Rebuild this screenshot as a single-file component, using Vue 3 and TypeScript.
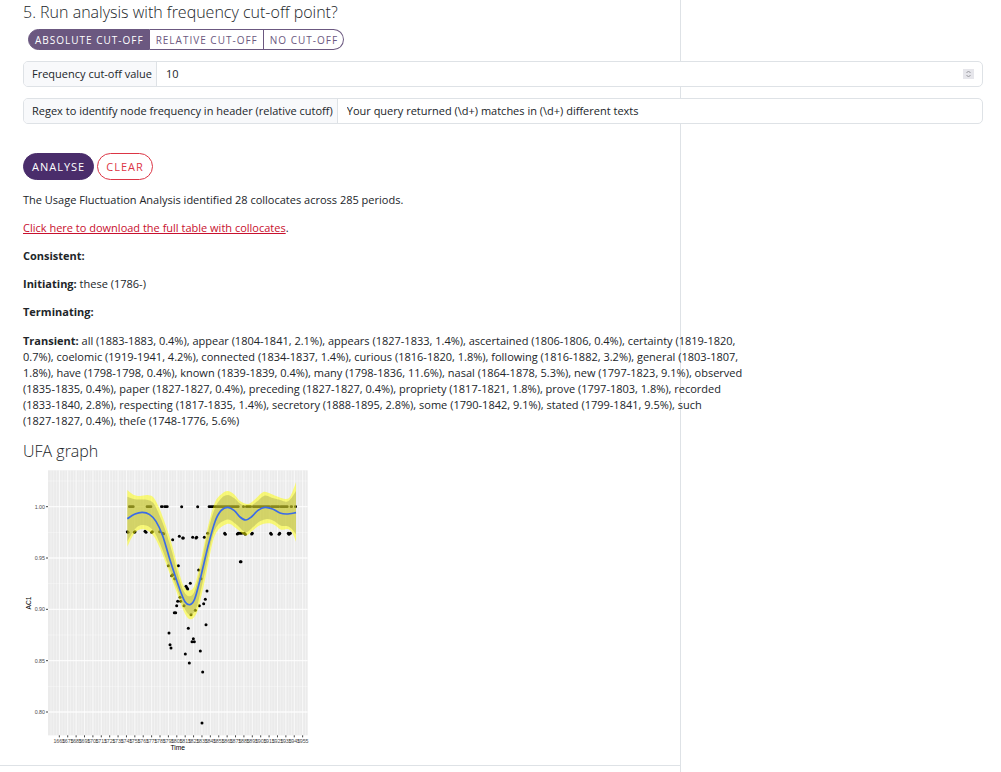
<script setup lang="ts">
import { ref } from 'vue'

type Point = [number, number]

const modes = ['Absolute cut-off', 'Relative cut-off', 'No cut-off']
const mode = ref(modes[0])
const cutoff = ref(10)
const regex = ref('Your query returned (\\d+) matches in (\\d+) different texts')

const transient = [
  'all (1883-1883, 0.4%), appear (1804-1841, 2.1%), appears (1827-1833, 1.4%), ascertained (1806-1806, 0.4%), certainty (1819-1820,',
  '0.7%), coelomic (1919-1941, 4.2%), connected (1834-1837, 1.4%), curious (1816-1820, 1.8%), following (1816-1882, 3.2%), general (1803-1807,',
  '1.8%), have (1798-1798, 0.4%), known (1839-1839, 0.4%), many (1798-1836, 11.6%), nasal (1864-1878, 5.3%), new (1797-1823, 9.1%), observed',
  '(1835-1835, 0.4%), paper (1827-1827, 0.4%), preceding (1827-1827, 0.4%), propriety (1817-1821, 1.8%), prove (1797-1803, 1.8%), recorded',
  '(1833-1840, 2.8%), respecting (1817-1835, 1.4%), secretory (1888-1895, 2.8%), some (1790-1842, 9.1%), stated (1799-1841, 9.5%), such',
  '(1827-1827, 0.4%), theſe (1748-1776, 5.6%)',
]

const years = Array.from({ length: 30 }, (_, i) => ({ label: 1665 + i * 10, x: 118 + i * 25.17 }))
const minor = Array.from({ length: 93 }, (_, i) => 93 + i * 8.39).filter((x) => x < 862)
const levels = [
  { label: '1.00', y: 125 },
  { label: '0.95', y: 279 },
  { label: '0.90', y: 433 },
  { label: '0.85', y: 587 },
  { label: '0.80', y: 741 },
]
const halfLevels = [48, 202, 356, 510, 664]

function smooth(p: Point[]): string {
  let d = ''
  for (let i = 0; i < p.length - 1; i++) {
    const a = p[Math.max(0, i - 1)]
    const b = p[i]
    const c = p[i + 1]
    const e = p[Math.min(p.length - 1, i + 2)]
    d += `C${b[0] + (c[0] - a[0]) / 6} ${b[1] + (c[1] - a[1]) / 6} ${c[0] - (e[0] - b[0]) / 6} ${c[1] - (e[1] - b[1]) / 6} ${c[0]} ${c[1]}`
  }
  return d
}

const trend: Point[] = [[322, 161], [345, 147], [367, 142], [388, 148], [408, 169], [428, 212], [450, 285], [480, 375], [495, 410], [510, 419], [524, 402], [540, 345], [565, 240], [585, 170], [603, 137], [623, 127], [643, 137], [660, 156], [677, 165], [694, 156], [714, 136], [735, 127], [758, 132], [780, 144], [800, 147], [828, 143]]
const upper: Point[] = [[322, 75], [340, 89], [360, 93], [382, 90], [400, 97], [418, 130], [436, 178], [456, 240], [478, 325], [492, 365], [508, 377], [525, 358], [545, 275], [565, 180], [585, 112], [605, 87], [623, 78], [642, 88], [660, 108], [685, 117], [710, 98], [730, 81], [752, 86], [776, 96], [798, 102], [812, 92], [828, 52]]
const lower: Point[] = [[322, 245], [338, 213], [354, 196], [370, 193], [388, 200], [405, 219], [425, 262], [450, 328], [475, 395], [495, 446], [512, 463], [530, 444], [546, 385], [562, 310], [578, 232], [592, 198], [612, 181], [630, 177], [652, 193], [677, 212], [700, 195], [720, 181], [742, 175], [762, 179], [783, 194], [803, 192], [816, 202], [828, 230]]
const innerUpper: Point[] = [[322, 95], [345, 103], [380, 104], [400, 114], [416, 145], [435, 193], [456, 260], [478, 343], [492, 380], [508, 394], [525, 375], [545, 292], [565, 195], [585, 129], [605, 99], [623, 90], [642, 99], [662, 117], [685, 125], [710, 110], [733, 92], [755, 98], [778, 104], [800, 110], [815, 98], [828, 78]]
const innerLower: Point[] = [[322, 230], [338, 202], [354, 184], [370, 180], [388, 186], [405, 205], [425, 248], [450, 315], [475, 382], [495, 433], [511, 450], [528, 432], [543, 374], [560, 297], [577, 217], [592, 182], [612, 167], [630, 165], [652, 181], [677, 202], [700, 185], [720, 169], [742, 162], [762, 168], [783, 182], [803, 184], [816, 193], [828, 208]]

const start = (p: Point[]) => `M${p[0][0]} ${p[0][1]}`
const line = (p: Point[]) => start(p) + smooth(p)
const band = (top: Point[], bottom: Point[]) => {
  const back = [...bottom].reverse()
  return `${line(top)}L${back[0][0]} ${back[0][1]}${smooth(back)}Z`
}

const runs = [[328, 340], [381, 393], [424, 427], [434, 442], [567, 655], [670, 671], [679, 692], [700, 748], [754, 776], [782, 802], [813, 815], [826, 827]]
const dots: Point[] = [
  [485, 125], [533, 125],
  [322, 200], [324, 202], [343, 202], [345, 200], [375, 199], [378, 202], [395, 202], [397, 200], [419, 200], [428, 205], [431, 206],
  [458, 224], [478, 214], [488, 219], [490, 219], [518, 217], [528, 219], [530, 217], [553, 217], [563, 205],
  [614, 205], [616, 208], [652, 207], [655, 205], [660, 205], [665, 205], [673, 205], [676, 208], [695, 207], [697, 205],
  [752, 205], [754, 208], [777, 208], [779, 205], [805, 205], [807, 208], [811, 205], [661, 290], [663, 290],
  [445, 302], [475, 302], [536, 315], [455, 332], [458, 329], [464, 341], [543, 341], [511, 355], [498, 364], [503, 372], [501, 369],
  [480, 397], [561, 378], [556, 403], [473, 409], [482, 409], [551, 416], [470, 422], [492, 422], [538, 422], [463, 443], [467, 443],
  [526, 436], [513, 449], [558, 479], [505, 490], [447, 504], [520, 521], [516, 530], [523, 530], [450, 539], [453, 549], [541, 558],
  [496, 567], [508, 594], [548, 621], [546, 774],
]
</script>

<template>
  <div class="page">
    <div class="column-rule"></div>
    <main class="content">
      <form @submit.prevent>
        <h2>5. Run analysis with frequency cut-off point?</h2>
        <div class="modes">
          <button v-for="m in modes" :key="m" type="button" :class="{ active: m === mode }" @click="mode = m">{{ m }}</button>
        </div>
        <div class="group">
          <label for="cutoff">Frequency cut-off value</label>
          <input id="cutoff" v-model="cutoff" type="number" />
          <button class="spinner" type="button" aria-label="Increase value" @click="cutoff++">
            <svg viewBox="0 0 11 10"><path d="M3.500 4 5.500 2 7.500 4M3.500 6 5.500 8 7.500 6" /></svg>
          </button>
        </div>
        <div class="group">
          <label for="regex">Regex to identify node frequency in header (relative cutoff)</label>
          <input id="regex" v-model="regex" type="text" />
        </div>
        <div class="actions">
          <button class="analyse" type="submit">Analyse</button>
          <button class="clear" type="button">Clear</button>
        </div>
      </form>

      <section class="results">
        <p>The Usage Fluctuation Analysis identified 28 collocates across 285 periods.</p>
        <p><a href="#">Click here to download the full table with collocates</a>.</p>
        <p><strong>Consistent:</strong></p>
        <p><strong>Initiating:</strong> these (1786-)</p>
        <p><strong>Terminating:</strong></p>
        <p class="transient"><strong>Transient:</strong> <template v-for="t in transient" :key="t">{{ t }}<br /></template></p>
      </section>

      <h2>UFA graph</h2>
      <svg class="graph" viewBox="0 0 870 870" role="img" aria-label="UFA graph">
        <rect x="84" y="16" width="779" height="795" fill="#ebebeb" />
        <g stroke="#fff">
          <path v-for="x in minor" :key="x" :d="`M${x} 16V811`" stroke-width="3" opacity=".35" />
          <path v-for="y in years" :key="y.label" :d="`M${y.x} 16V811`" stroke-width="3" opacity=".6" />
          <path v-for="y in halfLevels" :key="y" :d="`M84 ${y}H863`" stroke-width="2" opacity=".6" />
          <path v-for="l in levels" :key="l.y" :d="`M84 ${l.y}H863`" stroke-width="4" opacity=".8" />
        </g>
        <path v-for="r in runs" :key="r[0]" :d="`M${r[0]} 125H${r[1]}`" stroke="#000" stroke-width="8" stroke-linecap="round" />
        <circle v-for="(d, i) in dots" :key="i" :cx="d[0]" :cy="d[1]" r="4.500" />
        <path :d="band(upper, lower)" fill="#ff0" opacity=".5" />
        <path :d="band(innerUpper, innerLower)" fill="#969650" opacity=".37" />
        <path :d="line(trend)" fill="none" stroke="#3a6be8" stroke-width="5" />
        <g stroke="#444" stroke-width="3">
          <path v-for="l in levels" :key="l.y" :d="`M78 ${l.y}H84`" />
          <path v-for="y in years" :key="y.label" :d="`M${y.x} 811V817`" />
        </g>
        <g class="ticks">
          <text v-for="l in levels" :key="l.y" x="75" :y="l.y + 6" text-anchor="end">{{ l.label }}</text>
          <text v-for="y in years" :key="y.label" :x="y.x" y="833" text-anchor="middle">{{ y.label }}</text>
        </g>
        <g class="titles">
          <text x="473" y="855" text-anchor="middle">Time</text>
          <text transform="translate(33 414) rotate(-90)" text-anchor="middle">AC1</text>
        </g>
      </svg>
    </main>
    <div class="bottom-rule"></div>
  </div>
</template>

<style>
body {
  margin: 0;
  background: #fff;
}
</style>

<style scoped>
.page {
  display: grid;
  grid-template-columns: 68% 1fr;
  grid-template-rows: auto 1fr;
  min-height: 100vh;
  color: #212529;
  font: 11px/16px "Open Sans", "Noto Sans", sans-serif;
}
.column-rule {
  grid-area: 1 / 1 / 3 / 2;
  border-right: 1px solid #dee2e6;
}
.bottom-rule {
  grid-area: 2 / 1;
  margin-right: 1px;
  border-top: 1px solid #dee2e6;
}
.content {
  grid-area: 1 / 1 / 2 / 3;
  padding: 2px 18px 10px 23px;
  z-index: 1;
}
h2 {
  margin: 0;
  font: 300 16px/20px "Open Sans", sans-serif;
}
button,
input {
  font: inherit;
}
button {
  cursor: pointer;
}
.modes {
  display: flex;
  margin: 7px 0 11px 5px;
}
.modes button {
  height: 21px;
  padding: 0 5px 0 6px;
  border: 1px solid #6b5880;
  border-left-width: 0;
  background: #fff;
  color: #6b5880;
  font-size: 10px;
  line-height: 18px;
  letter-spacing: 1px;
  text-transform: uppercase;
}
.modes button:first-child {
  border-left-width: 1px;
  border-radius: 11px 0 0 11px;
}
.modes button:last-child {
  border-radius: 0 11px 11px 0;
}
.modes button.active {
  background: #6b5880;
  color: #fff;
}
.group {
  display: flex;
  align-items: center;
  height: 24px;
  margin-bottom: 11px;
  overflow: hidden;
  border: 1px solid #dee2e6;
  border-radius: 5px;
  background: #fff;
}
.group label {
  padding: 4px 4px 4px 8px;
  border-right: 1px solid #dee2e6;
  background: #f8f9fb;
}
.group input {
  flex: 1;
  min-width: 0;
  padding: 0 9px;
  border: 0;
  outline: 0;
  background: transparent;
  color: inherit;
  appearance: textfield;
}
.group input::-webkit-inner-spin-button {
  appearance: none;
}
.spinner {
  width: 11px;
  height: 10px;
  margin-right: 8px;
  padding: 0;
  border: 0;
  background: #e6e6eb;
}
.spinner svg {
  display: block;
  fill: none;
  stroke: #96969c;
}
.actions {
  display: flex;
  gap: 3px;
  margin-top: 29px;
}
.actions button {
  height: 27px;
  padding: 0 8px;
  border: 1px solid #4a2d6b;
  border-radius: 14px;
  letter-spacing: 1px;
  text-transform: uppercase;
}
.analyse {
  background: #4a2d6b;
  color: #fff;
}
.actions .clear {
  border-color: #dc3545;
  background: #fff;
  color: #dc3545;
}
.results {
  margin: 12px 0 11px;
}
.results p {
  margin: 0 0 12px;
}
.results .transient {
  margin-top: 13px;
  white-space: nowrap;
}
strong {
  font-weight: 700;
}
.results a {
  color: #c8102e;
}
.graph {
  display: block;
  width: 290px;
  height: 290px;
  margin: 4px 0 0 -3px;
}
.ticks {
  fill: #4d4d4d;
  font: 16px "Liberation Sans", sans-serif;
}
.titles {
  font: 20px "Liberation Sans", sans-serif;
}
</style>
